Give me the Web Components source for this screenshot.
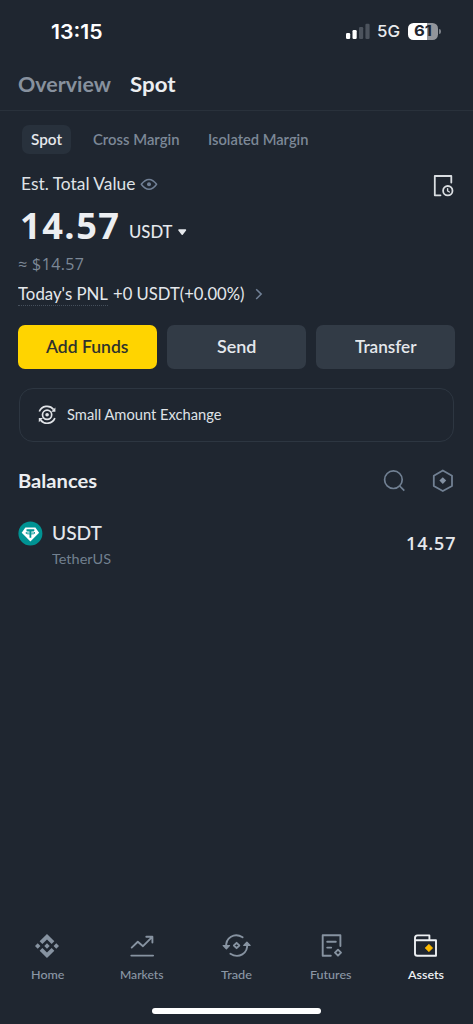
<!DOCTYPE html>
<html lang="en">
<head>
<meta charset="utf-8">
<title>Spot wallet</title>
<style>
html,body{margin:0;background:#1f2630}
body{width:473px;height:1024px;overflow:hidden;font-family:Lato,"Open Sans",sans-serif}
</style>
</head>
<body>
<wallet-app></wallet-app>
<script>
// Text run with a fixed measure: the run is widened or condensed to fill it.
// With the track attribute the letters are spaced out first.
class UiText extends HTMLElement {
  connectedCallback() {
    const a = n => this.getAttribute(n);
    const r = this.attachShadow({mode: 'open'});
    r.innerHTML = `<style>
      :host{display:block;flex:none;white-space:nowrap;width:${a('w')}px;font-size:${a('size')}px;
        font-weight:${a('weight') || 400};color:${a('color') || '#e5e8ec'};line-height:1.2;
        ${a('font') ? `font-family:"${a('font')}",sans-serif;` : ''}}
      span{display:inline-block;transform-origin:0 50%;letter-spacing:${a('track') || 0}px}
    </style><span><slot></slot></span>`;
    const s = r.querySelector('span');
    s.style.transform = `scaleX(${(+a('w') / (s.getBoundingClientRect().width - (+a('track') || 0))).toFixed(4)})`;
  }
}

const G = '#8793a1', L = '#8b97a5';
const ICONS = {
  signal: ['345 22 26 19', `<g><rect x="346" y="33" width="4.2" height="6" rx="1.2" fill="#fff"/><rect x="352.5" y="30" width="4.2" height="9" rx="1.2" fill="#fff"/><rect x="359" y="27" width="4.2" height="12" rx="1.2" fill="#4c535d"/><rect x="365.4" y="23.8" width="4.2" height="15.2" rx="1.2" fill="#4c535d"/></g>`],
  eye: ['140 177 18 15', `<g fill="none" stroke="#718096" stroke-width="1.5" stroke-linejoin="round"><path d="M141.3 184.3Q145 179.4 149 179.4T156.6 184.3Q153 189.3 149 189.3T141.3 184.3Z"/></g><circle cx="149" cy="184.3" r="2" fill="#718096"/>`],
  history: ['432 173 23 25', `<g fill="none" stroke="#d9dde1" stroke-width="1.8" stroke-linejoin="round" stroke-linecap="round"><path d="M451.3 182.6V176H434.8V195.3H440.5"/><circle cx="447.8" cy="190.7" r="4.7"/><path d="M447.6 188.6V191L449.4 192" stroke-width="1.4"/></g>`],
  caret: ['177 228 10 8', `<path d="M178.9 230H185.5L182.2 234.2Z" fill="#e5e8ec" stroke="#e5e8ec" stroke-width="1.4" stroke-linejoin="round"/>`],
  chevron: ['254 287 11 14', `<path d="M257.2 289.3L262.2 294.1L257.2 299" fill="none" stroke="#718096" stroke-width="1.5"/>`],
  exchange: ['37 404 21 21', `<g fill="none" stroke="#e0e3e7" stroke-width="1.7"><circle cx="47.1" cy="414.8" r="4.6"/><path d="M39.3 411.5A8.4 8.4 0 0 1 53.6 409.5"/><path d="M54.9 418.1A8.4 8.4 0 0 1 40.6 420.1"/></g><circle cx="47.1" cy="414.8" r="1.8" fill="#e0e3e7"/><path d="M55.4 407.4V411.7H51.2Z M38.8 422.2V417.9H43Z" fill="#e0e3e7"/>`],
  search: ['382 469 24 24', `<g fill="none" stroke="#718093" stroke-width="1.7"><circle cx="393.4" cy="479.7" r="8.8"/><path d="M399.7 486L404.3 490.6"/></g>`],
  hex: ['431 468 24 25', `<path d="M442.8 470.5L452 475.7V486L442.8 491L433.8 486V475.7Z" fill="none" stroke="#718093" stroke-width="1.8" stroke-linejoin="round"/><path d="M442.8 477.2L446.2 480.6L442.8 484L439.4 480.6Z" fill="#8391a3"/>`],
  tether: ['18 521 25 25', `<circle cx="30.4" cy="533.4" r="12" fill="#009393"/><path d="M25.4 527.6H35.4L39.1 532.8L30.4 541.4L21.7 532.8Z" fill="#fff"/><path d="M26.5 529.2H34.3V531H31.3V537.8H29.5V531H26.5Z" fill="#009393"/><ellipse cx="30.4" cy="532.9" rx="4.6" ry="1.1" fill="none" stroke="#009393" stroke-width=".9"/>`],
  home: ['0 0 24 24', `<path fill="${G}" d="M16.624 13.9202l2.7175 2.7154-7.353 7.353-7.353-7.352 2.7175-2.7164 4.6355 4.6595 4.6356-4.6595zm4.6366-4.6366L24 12l-2.7154 2.7164L18.5682 12l2.6924-2.7164zm-9.272.001l2.7163 2.6914-2.7164 2.7174v-.001L9.2721 12l2.7164-2.7154zm-9.2722-.001L5.4088 12l-2.6914 2.6924L0 12l2.7164-2.7164zM11.9885.0115l7.353 7.329-2.7174 2.7154-4.6356-4.6356-4.6355 4.6595-2.7174-2.7154 7.353-7.353z"/>`],
  markets: ['128.5 932 26 27', `<path d="M131.2 947.6L137.3 941.8L142.5 946.2L151.5 937.2M145.8 936.7H151.9V942.6M130.8 955.6H152.6" fill="none" stroke="${G}" stroke-width="1.9" stroke-linejoin="round" stroke-linecap="round"/>`],
  trade: ['222 932 29 27', `<g fill="none" stroke="${G}" stroke-width="1.9" stroke-linecap="round" stroke-linejoin="round"><path d="M226.2 947.5C225.2 937.4 234.5 932.4 242.6 937.2"/><path d="M223.2 945.6L226.4 948.7L229.4 945.6Z" fill="${G}" stroke-width="1.4"/><path d="M230.4 953.7C238.6 959 248.4 953.5 247 943.5"/><path d="M243.8 945.4L246.9 942.3L250 945.4Z" fill="${G}" stroke-width="1.4"/><path d="M236.6 942.8L239.3 945.5L236.6 948.2L233.9 945.5Z"/></g>`],
  futures: ['318 932 26 27', `<g fill="none" stroke="${G}" stroke-width="1.9" stroke-linecap="round" stroke-linejoin="round"><path d="M340.4 946V935.3H322.7V955.7H330.8M327.2 941.7H335.8M327.2 947.6H331.2"/><path d="M338 949.7L341 952.7L338 955.7L335 952.7Z"/></g>`],
  assets: ['412 932 27 27', `<path d="M415 938V953.5Q415 955.8 417.3 955.8H436V940.2H415M415 938Q415 935.4 417.5 935.4H429.4V940" fill="none" stroke="#edf0f3" stroke-width="1.9" stroke-linejoin="round"/><path d="M428.9 944.2L432.7 948L428.9 951.8L425.1 948Z" fill="#fcb900" stroke="#fcb900" stroke-width=".6" stroke-linejoin="round"/>`]
};
class UiIcon extends HTMLElement {
  connectedCallback() {
    const [vb, body] = ICONS[this.getAttribute('name')];
    const [, , w, h] = vb.split(' ');
    this.attachShadow({mode: 'open'}).innerHTML =
      `<style>:host{display:block;flex:none;width:${w}px;height:${h}px}svg{display:block}</style>
       <svg width="${w}" height="${h}" viewBox="${vb}">${body}</svg>`;
  }
}

class StatusBar extends HTMLElement {
  connectedCallback() {
    this.attachShadow({mode: 'open'}).innerHTML = `<style>
      :host{display:flex;align-items:center;height:63px;padding:0 32px 0 51px}
      .t{padding-top:2px}
      .r{margin-left:auto;display:flex;align-items:center}
      .sig{margin-right:6px}
      .g{padding-top:1px}
      .bat{margin-left:8px;width:30.5px;height:17px;border-radius:5.5px;display:flex;align-items:center;justify-content:center;
        background:linear-gradient(90deg,#fff 62%,#92959b 62%)}
      .nub{width:1.6px;height:5px;border-radius:0 2px 2px 0;background:#7b8088;margin-left:1px}
    </style>
    <ui-text class="t" w="51.5" size="20.5" weight="600" font="Inter" color="#fff">13:15</ui-text>
    <div class="r"><ui-icon class="sig" name="signal"></ui-icon>
      <ui-text class="g" w="23" size="16.5" weight="500" font="Inter" color="#e8eaed">5G</ui-text>
      <div class="bat"><ui-text w="18" size="15" weight="700" font="Inter" color="#1f2630">61</ui-text></div><div class="nub"></div></div>`;
  }
}

class ActionButton extends HTMLElement {
  connectedCallback() {
    this.attachShadow({mode: 'open'}).innerHTML = `<style>
      :host{display:flex;flex:1;align-items:center;justify-content:center;height:44px;border-radius:7px;background:#323b46}
      :host([primary]){background:#ffd400}
    </style><slot></slot>`;
  }
}

class NavItem extends HTMLElement {
  connectedCallback() {
    this.attachShadow({mode: 'open'}).innerHTML = `<style>
      :host{display:flex;flex-direction:column;align-items:center;width:94.6px}
      .i{height:28px;display:flex;align-items:center;margin-bottom:8px}
    </style><div class="i"><ui-icon name="${this.getAttribute('icon')}"></ui-icon></div><slot></slot>`;
  }
}

class WalletApp extends HTMLElement {
  connectedCallback() {
    this.attachShadow({mode: 'open'}).innerHTML = `<style>
      :host{display:flex;flex-direction:column;width:473px;height:1024px;background:#1f2630}
      .row{display:flex;align-items:center;flex:none}
      .head{height:42px;padding:0 18px 5px;gap:18.5px;border-bottom:1px solid #29313b}
      .tabs{height:29px;padding:14px 22px 0;}
      .chip{display:flex;align-items:center;justify-content:center;width:49px;height:29px;border-radius:7px;background:#28313c}
      .est{height:30px;margin-top:15px;padding:0 18px 0 20.5px}
      .est ui-text{padding-top:2px}
      .est ui-icon{margin-left:5px}
      .est ui-icon:last-child{margin-left:auto;margin-top:3px}
      .total{height:53px;padding-left:19.5px}
      .total .u{margin:14px 4px 0 10.5px}
      .total ui-icon{margin-top:13px}
      .fiat{height:25px;padding-left:18px}
      .pnl{height:34px;padding-left:18px}
      .dot{height:20.5px;padding-top:2.5px;border-bottom:1px dotted #46505c}
      .act{margin:14px 18px 0;gap:9.6px}
      .small{margin:19px 19px 0;height:51.5px;border:1px solid #2d3641;border-radius:14px;box-sizing:content-box}
      .small ui-icon{margin:0 8.5px 0 17px}
      .bal{margin-top:20px;height:40px;padding:0 18px}
      .bal ui-icon{margin-top:-2px}
      .bal ui-icon:nth-child(2){margin-left:auto;margin-right:25px}
      .coin{margin-top:20px;padding:0 18px}
      .coin>ui-icon{margin-top:-22px;margin-right:9px}
      .coin .n{display:flex;flex-direction:column;gap:7px}
      .coin>ui-text:last-child{margin-left:auto;margin-top:-2px}
      .nav{margin-top:auto;height:76px;padding-bottom:13px}
      .bar{width:168.5px;height:6px;border-radius:3px;background:#fff;margin:0 auto 10px;flex:none}
    </style>
    <status-bar></status-bar>
    <div class="row head">
      <ui-text w="93" size="21" weight="700" color="#87919e">Overview</ui-text>
      <ui-text w="45.5" size="21" weight="700" color="#eceef1">Spot</ui-text></div>
    <div class="row tabs">
      <div class="chip"><ui-text w="31" size="14.5" weight="600">Spot</ui-text></div>
      <ui-text style="margin-left:21.5px" w="86.5" size="14.5" weight="600" color="#7c8897">Cross Margin</ui-text>
      <ui-text style="margin-left:28.5px" w="100.5" size="14.5" weight="600" color="#7c8897">Isolated Margin</ui-text></div>
    <div class="row est"><ui-text w="114.5" size="16.5" color="#dfe2e6">Est. Total Value</ui-text><ui-icon name="eye"></ui-icon><ui-icon name="history"></ui-icon></div>
    <div class="row total"><ui-text w="99" size="36.5" weight="700" track="1.5" font="Open Sans" color="#eceef1">14.57</ui-text>
      <ui-text class="u" w="43.5" size="16.5" weight="500">USDT</ui-text><ui-icon name="caret"></ui-icon></div>
    <div class="row fiat"><ui-text w="66" size="16" track=".4" font="Open Sans" color="#7c8897">≈ $14.57</ui-text></div>
    <div class="row pnl"><div class="dot"><ui-text w="90" size="16.5">Today's PNL</ui-text></div>
      <ui-text style="margin:2px 0 0 4.5px" w="131.5" size="16.5">+0 USDT(+0.00%)</ui-text><ui-icon style="margin-left:9px" name="chevron"></ui-icon></div>
    <div class="row act">
      <action-button primary><ui-text w="82.5" size="17" weight="600" color="#30332c">Add Funds</ui-text></action-button>
      <action-button><ui-text w="39.5" size="17" weight="600">Send</ui-text></action-button>
      <action-button><ui-text w="61.5" size="17" weight="600">Transfer</ui-text></action-button></div>
    <div class="row small"><ui-icon name="exchange"></ui-icon><ui-text w="154.5" size="14.5" color="#dfe2e6">Small Amount Exchange</ui-text></div>
    <div class="row bal"><ui-text w="79" size="18.5" weight="700" color="#eceef1">Balances</ui-text><ui-icon name="search"></ui-icon><ui-icon name="hex"></ui-icon></div>
    <div class="row coin"><ui-icon name="tether"></ui-icon>
      <div class="n"><ui-text w="50" size="18.5" weight="500">USDT</ui-text><ui-text w="59" size="14" color="#72808f">TetherUS</ui-text></div>
      <ui-text w="49.5" size="18" weight="600" track=".9" font="Open Sans">14.57</ui-text></div>
    <div class="row nav">
      <nav-item icon="home"><ui-text w="33.5" size="12" weight="500" color="${L}">Home</ui-text></nav-item>
      <nav-item icon="markets"><ui-text w="43.5" size="12" weight="500" color="${L}">Markets</ui-text></nav-item>
      <nav-item icon="trade"><ui-text w="31" size="12" weight="500" color="${L}">Trade</ui-text></nav-item>
      <nav-item icon="futures"><ui-text w="41.5" size="12" weight="500" color="${L}">Futures</ui-text></nav-item>
      <nav-item icon="assets"><ui-text w="36" size="12" weight="600" color="#edf0f3">Assets</ui-text></nav-item></div>
    <div class="bar"></div>`;
  }
}
customElements.define('ui-text', UiText);
customElements.define('ui-icon', UiIcon);
customElements.define('status-bar', StatusBar);
customElements.define('action-button', ActionButton);
customElements.define('nav-item', NavItem);
customElements.define('wallet-app', WalletApp);
</script>
</body>
</html>
